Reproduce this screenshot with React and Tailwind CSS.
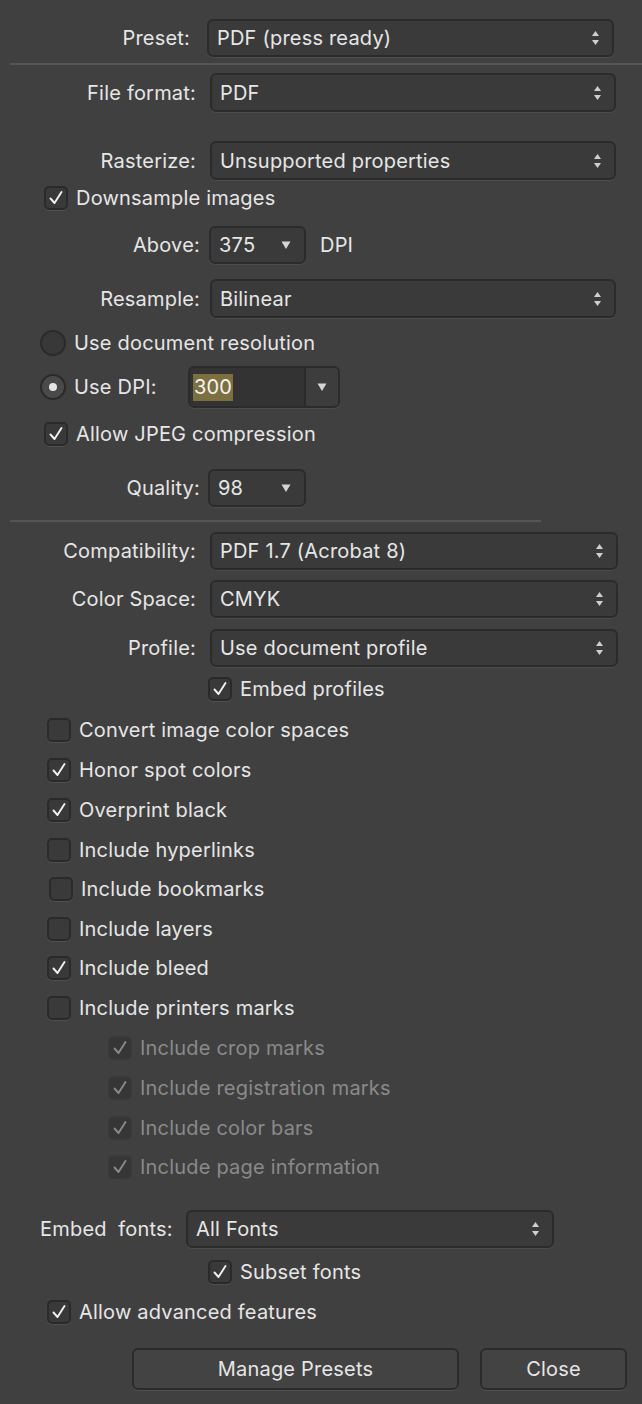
import React from 'react'

const font = { fontFamily: 'Inter, "Noto Sans", sans-serif' }

function Stepper() {
  return (
    <svg width="9" height="22" viewBox="0 0 9 22" className="shrink-0">
      <path d="M4.5 4 L8 9 L1 9 Z" fill="#cfcfcf" />
      <path d="M4.5 18 L8 13 L1 13 Z" fill="#cfcfcf" />
    </svg>
  )
}

function DownArrow() {
  return (
    <svg width="12" height="10" viewBox="0 0 12 10" className="shrink-0">
      <path d="M1.5 1.5 L10.5 1.5 L6 9 Z" fill="#d4d4d4" />
    </svg>
  )
}

function Popup({ value, className = '', arrow = 'stepper' }) {
  return (
    <div
      className={`flex h-full items-center justify-between rounded-[6px] border-2 border-[#2b2b2b] bg-[#3a3a3a] pl-[8px] pr-[12px] shadow-[0_1px_0_#4c4c4c] ${className}`}
    >
      <span className="truncate text-[20px] tracking-[0.2px] text-[#e6e6e6]">{value}</span>
      {arrow === 'stepper' ? <Stepper /> : <DownArrow />}
    </div>
  )
}

function Check({ disabled }) {
  return (
    <div
      className={`flex h-[24px] w-[24px] shrink-0 items-center justify-center rounded-[5px] border-2 ${
        disabled ? 'border-[#393939] bg-[#363636]' : 'border-[#2a2a2a] bg-[#393939] shadow-[0_1px_0_#4e4e4e]'
      }`}
    >
      <svg width="18" height="18" viewBox="0 0 18 18">
        <path
          d="M3.5 9.5 L7.5 14 L14.5 3"
          fill="none"
          stroke={disabled ? '#8a8a8a' : '#f2f2f2'}
          strokeWidth="1.9"
          strokeLinecap="round"
          strokeLinejoin="round"
        />
      </svg>
    </div>
  )
}

function Box() {
  return <div className="h-[24px] w-[24px] shrink-0 rounded-[5px] border-2 border-[#2a2a2a] bg-[#3a3a3a] shadow-[0_1px_0_#4e4e4e]" />
}

function Radio({ on }) {
  return (
    <div
      className={`flex h-[26px] w-[26px] shrink-0 items-center justify-center rounded-full border-2 border-[#2a2a2a] ${
        on ? 'bg-[#4a4a4a]' : 'bg-[#383838]'
      }`}
    >
      {on && <div className="h-[8px] w-[8px] rounded-full bg-[#e6e6e6]" />}
    </div>
  )
}

function CheckRow({ label, checked, disabled, className = '' }) {
  return (
    <div className={`flex h-[24px] items-center ${className}`}>
      {checked ? <Check disabled={disabled} /> : <Box />}
      <span className={`ml-[8px] text-[20px] tracking-[0.2px] ${disabled ? 'text-[#8a8a8a]' : 'text-[#e6e6e6]'}`}>{label}</span>
    </div>
  )
}

function FieldRow({ label, value, className = '', labelW = 'w-[196px]', gap = 'ml-[14px]', popupW = 'w-[406px]', arrow }) {
  return (
    <div className={`flex items-center ${className}`}>
      <span className={`${labelW} shrink-0 text-right text-[20px] tracking-[0.2px] text-[#e6e6e6]`}>{label}</span>
      <div className={`${gap} ${popupW} h-full`}>
        <Popup value={value} arrow={arrow} />
      </div>
    </div>
  )
}

export default function App() {
  return (
    <div style={font} className="flex h-[1404px] w-[642px] flex-col overflow-hidden bg-[#404040] antialiased">
      <FieldRow label="Preset:" value="PDF (press ready)" className="mt-[19px] h-[38px]" labelW="w-[190px]" gap="ml-[17px]" popupW="w-[407px]" />
      <div className="ml-[10px] mt-[6px] h-[2px] bg-[#555555]" />
      <FieldRow label="File format:" value="PDF" className="mt-[8px] h-[39px]" />
      <FieldRow label="Rasterize:" value="Unsupported properties" className="mt-[29px] h-[39px]" />
      <CheckRow label="Downsample images" checked className="mt-[6px] pl-[44px]" />

      <div className="mt-[16px] flex h-[38px] items-center">
        <span className="w-[200px] shrink-0 text-right text-[20px] tracking-[0.2px] text-[#e6e6e6]">Above:</span>
        <div className="ml-[9px] h-full w-[97px]">
          <Popup value="375" arrow="down" />
        </div>
        <span className="ml-[14px] text-[20px] tracking-[0.2px] text-[#e6e6e6]">DPI</span>
      </div>

      <FieldRow label="Resample:" value="Bilinear" className="mt-[15px] h-[39px]" labelW="w-[200px]" gap="ml-[10px]" />

      <div className="mt-[12px] flex h-[26px] items-center pl-[40px]">
        <Radio />
        <span className="ml-[8px] text-[20px] tracking-[0.2px] text-[#e6e6e6]">Use document resolution</span>
      </div>

      <div className="mt-[10px] flex h-[42px] items-center pl-[40px]">
        <Radio on />
        <span className="ml-[8px] w-[114px] shrink-0 text-[20px] tracking-[0.2px] text-[#e6e6e6]">Use DPI:</span>
        <div className="flex h-full w-[152px] overflow-hidden rounded-[6px] border-2 border-[#2b2b2b] bg-[#333333] shadow-[0_1px_0_#4c4c4c]">
          <div className="flex flex-1 items-center pl-[3px]">
            <span className="bg-[#7d7040] px-[1px] text-[20px] leading-[27px] tracking-[0.2px] text-[#f4f4f4]">300</span>
          </div>
          <div className="flex w-[34px] items-center justify-center border-l-2 border-[#2b2b2b] bg-[#3d3d3d]">
            <DownArrow />
          </div>
        </div>
      </div>

      <CheckRow label="Allow JPEG compression" checked className="mt-[14px] pl-[44px]" />

      <div className="mt-[23px] flex h-[38px] items-center">
        <span className="w-[200px] shrink-0 text-right text-[20px] tracking-[0.2px] text-[#e6e6e6]">Quality:</span>
        <div className="ml-[8px] h-full w-[98px]">
          <Popup value="98" arrow="down" />
        </div>
      </div>

      <div className="ml-[10px] mt-[13px] h-[2px] w-[531px] bg-[#555555]" />

      <FieldRow label="Compatibility:" value="PDF 1.7 (Acrobat 8)" className="mt-[10px] h-[38px]" popupW="w-[408px]" />
      <FieldRow label="Color Space:" value="CMYK" className="mt-[10px] h-[38px]" popupW="w-[408px]" />
      <FieldRow label="Profile:" value="Use document profile" className="mt-[11px] h-[38px]" popupW="w-[408px]" />
      <CheckRow label="Embed profiles" checked className="mt-[10px] pl-[208px]" />

      <CheckRow label="Convert image color spaces" className="mt-[17px] pl-[47px]" />
      <CheckRow label="Honor spot colors" checked className="mt-4 pl-[47px]" />
      <CheckRow label="Overprint black" checked className="mt-4 pl-[47px]" />
      <CheckRow label="Include hyperlinks" className="mt-4 pl-[47px]" />
      <CheckRow label="Include bookmarks" className="mt-[15px] pl-[49px]" />
      <CheckRow label="Include layers" className="mt-4 pl-[47px]" />
      <CheckRow label="Include bleed" checked className="mt-[15px] pl-[47px]" />
      <CheckRow label="Include printers marks" className="mt-4 pl-[47px]" />
      <CheckRow label="Include crop marks" checked disabled className="mt-4 pl-[108px]" />
      <CheckRow label="Include registration marks" checked disabled className="mt-4 pl-[108px]" />
      <CheckRow label="Include color bars" checked disabled className="mt-4 pl-[108px]" />
      <CheckRow label="Include page information" checked disabled className="mt-[15px] pl-[108px]" />

      <div className="mt-[31px] flex h-[38px] items-center pl-[40px]">
        <span className="w-[133px] shrink-0 whitespace-pre text-[20px] tracking-[0.2px] text-[#e6e6e6]">Embed  fonts:</span>
        <div className="ml-[13px] h-full w-[368px]">
          <Popup value="All Fonts" />
        </div>
      </div>

      <CheckRow label="Subset fonts" checked className="mt-[12px] pl-[208px]" />
      <CheckRow label="Allow advanced features" checked className="mt-4 pl-[47px]" />

      <div className="mt-[24px] flex h-[42px] pl-[132px]">
        <button className="h-full w-[327px] rounded-[6px] border-2 border-[#2b2b2b] bg-[#434343] text-[20px] tracking-[0.2px] text-[#e6e6e6] shadow-[0_1px_0_#505050]">
          Manage Presets
        </button>
        <button className="ml-[21px] h-full w-[147px] rounded-[6px] border-2 border-[#2b2b2b] bg-[#434343] text-[20px] tracking-[0.2px] text-[#e6e6e6] shadow-[0_1px_0_#505050]">
          Close
        </button>
      </div>
    </div>
  )
}
